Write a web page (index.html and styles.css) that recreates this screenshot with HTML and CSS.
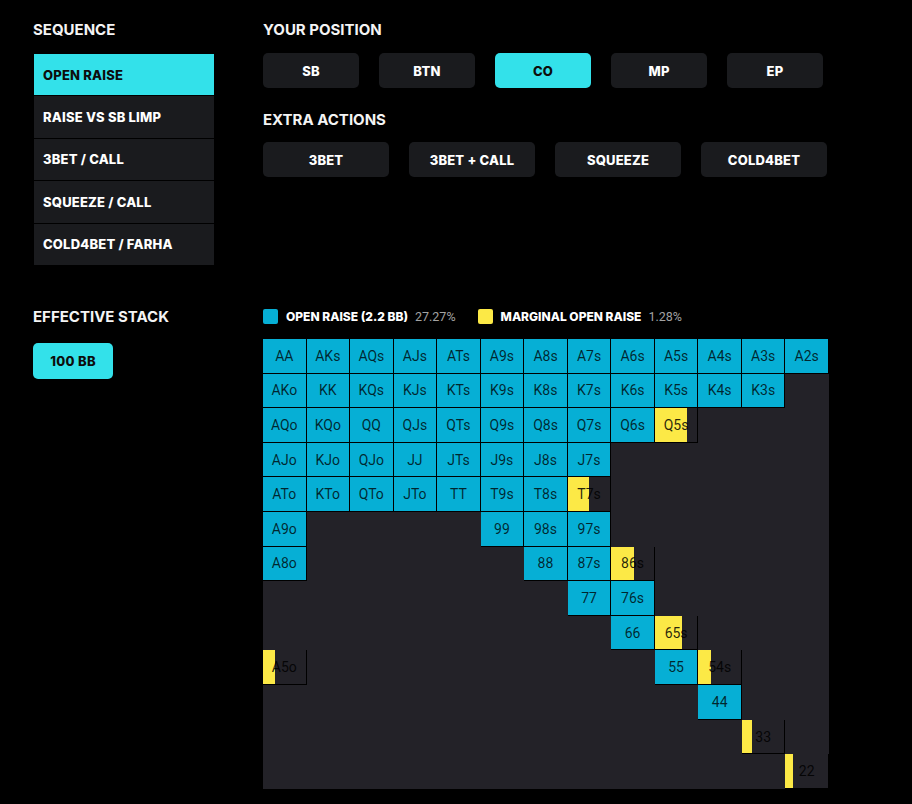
FILE: index.html
```html
<!DOCTYPE html>
<html lang="en">
<head>
<meta charset="utf-8">
<title>Preflop Ranges</title>
<link rel="stylesheet" href="styles.css">
</head>
<body>
<div class="page">
  <section class="top">
    <div class="col-left">
      <h2 class="title">SEQUENCE</h2>
      <div class="seq">
        <div class="seq-item active">OPEN RAISE</div>
        <div class="seq-item">RAISE VS SB LIMP</div>
        <div class="seq-item">3BET / CALL</div>
        <div class="seq-item">SQUEEZE / CALL</div>
        <div class="seq-item">COLD4BET / FARHA</div>
      </div>
    </div>
    <div class="col-right">
      <h2 class="title">YOUR POSITION</h2>
      <div class="btn-row">
        <div class="btn pos">SB</div>
        <div class="btn pos">BTN</div>
        <div class="btn pos active">CO</div>
        <div class="btn pos">MP</div>
        <div class="btn pos">EP</div>
      </div>
      <h2 class="title title-extra">EXTRA ACTIONS</h2>
      <div class="btn-row btn-row-extra">
        <div class="btn act">3BET</div>
        <div class="btn act">3BET + CALL</div>
        <div class="btn act">SQUEEZE</div>
        <div class="btn act">COLD4BET</div>
      </div>
    </div>
  </section>

  <section class="bottom">
    <div class="col-left">
      <h2 class="title">EFFECTIVE STACK</h2>
      <div class="stack-btn">100 BB</div>
    </div>
    <div class="col-right">
      <div class="legend">
        <div class="legend-item">
          <span class="sw sw-blue"></span>
          <span class="lg-label">OPEN RAISE (2.2 BB)</span>
          <span class="lg-pct">27.27%</span>
        </div>
        <div class="legend-item">
          <span class="sw sw-yellow"></span>
          <span class="lg-label">MARGINAL OPEN RAISE</span>
          <span class="lg-pct">1.28%</span>
        </div>
      </div>
      <div class="grid">
        <!-- row A -->
        <div class="c r">AA</div><div class="c r">AKs</div><div class="c r">AQs</div><div class="c r">AJs</div><div class="c r">ATs</div><div class="c r">A9s</div><div class="c r">A8s</div><div class="c r">A7s</div><div class="c r">A6s</div><div class="c r">A5s</div><div class="c r">A4s</div><div class="c r">A3s</div><div class="c r">A2s</div>
        <!-- row K -->
        <div class="c r">AKo</div><div class="c r">KK</div><div class="c r">KQs</div><div class="c r">KJs</div><div class="c r">KTs</div><div class="c r">K9s</div><div class="c r">K8s</div><div class="c r">K7s</div><div class="c r">K6s</div><div class="c r">K5s</div><div class="c r">K4s</div><div class="c r">K3s</div><div class="c"></div>
        <!-- row Q -->
        <div class="c r">AQo</div><div class="c r">KQo</div><div class="c r">QQ</div><div class="c r">QJs</div><div class="c r">QTs</div><div class="c r">Q9s</div><div class="c r">Q8s</div><div class="c r">Q7s</div><div class="c r">Q6s</div><div class="c m" style="--y:77%">Q5s</div><div class="c"></div><div class="c"></div><div class="c"></div>
        <!-- row J -->
        <div class="c r">AJo</div><div class="c r">KJo</div><div class="c r">QJo</div><div class="c r">JJ</div><div class="c r">JTs</div><div class="c r">J9s</div><div class="c r">J8s</div><div class="c r">J7s</div><div class="c"></div><div class="c"></div><div class="c"></div><div class="c"></div><div class="c"></div>
        <!-- row T -->
        <div class="c r">ATo</div><div class="c r">KTo</div><div class="c r">QTo</div><div class="c r">JTo</div><div class="c r">TT</div><div class="c r">T9s</div><div class="c r">T8s</div><div class="c m" style="--y:50%">T7s</div><div class="c"></div><div class="c"></div><div class="c"></div><div class="c"></div><div class="c"></div>
        <!-- row 9 -->
        <div class="c r">A9o</div><div class="c"></div><div class="c"></div><div class="c"></div><div class="c"></div><div class="c r">99</div><div class="c r">98s</div><div class="c r">97s</div><div class="c"></div><div class="c"></div><div class="c"></div><div class="c"></div><div class="c"></div>
        <!-- row 8 -->
        <div class="c r">A8o</div><div class="c"></div><div class="c"></div><div class="c"></div><div class="c"></div><div class="c"></div><div class="c r">88</div><div class="c r">87s</div><div class="c m" style="--y:53%">86s</div><div class="c"></div><div class="c"></div><div class="c"></div><div class="c"></div>
        <!-- row 7 -->
        <div class="c"></div><div class="c"></div><div class="c"></div><div class="c"></div><div class="c"></div><div class="c"></div><div class="c"></div><div class="c r">77</div><div class="c r">76s</div><div class="c"></div><div class="c"></div><div class="c"></div><div class="c"></div>
        <!-- row 6 -->
        <div class="c"></div><div class="c"></div><div class="c"></div><div class="c"></div><div class="c"></div><div class="c"></div><div class="c"></div><div class="c"></div><div class="c r">66</div><div class="c m" style="--y:65%">65s</div><div class="c"></div><div class="c"></div><div class="c"></div>
        <!-- row 5 -->
        <div class="c m" style="--y:28%">A5o</div><div class="c"></div><div class="c"></div><div class="c"></div><div class="c"></div><div class="c"></div><div class="c"></div><div class="c"></div><div class="c"></div><div class="c r">55</div><div class="c m" style="--y:30%">54s</div><div class="c"></div><div class="c"></div>
        <!-- row 4 -->
        <div class="c"></div><div class="c"></div><div class="c"></div><div class="c"></div><div class="c"></div><div class="c"></div><div class="c"></div><div class="c"></div><div class="c"></div><div class="c"></div><div class="c r">44</div><div class="c"></div><div class="c"></div>
        <!-- row 3 -->
        <div class="c"></div><div class="c"></div><div class="c"></div><div class="c"></div><div class="c"></div><div class="c"></div><div class="c"></div><div class="c"></div><div class="c"></div><div class="c"></div><div class="c"></div><div class="c m" style="--y:23%">33</div><div class="c"></div>
        <!-- row 2 -->
        <div class="c"></div><div class="c"></div><div class="c"></div><div class="c"></div><div class="c"></div><div class="c"></div><div class="c"></div><div class="c"></div><div class="c"></div><div class="c"></div><div class="c"></div><div class="c"></div><div class="c m" style="--y:18%">22</div>
      </div>
    </div>
  </section>
</div>
</body>
</html>
```

FILE: styles.css
```css
* { box-sizing: border-box; }

body {
  margin: 0;
  background: #000;
  color: #f2f2f2;
  font-family: Inter, "Noto Sans", sans-serif;
}

.page {
  padding: 21px 33px 0;
}

.top,
.bottom {
  display: grid;
  grid-template-columns: 181px 566px;
  column-gap: 49px;
}

.bottom {
  margin-top: 43px;
}

.title {
  margin: 0;
  font-size: 15px;
  line-height: 18px;
  font-weight: 700;
  color: #f4f4f4;
}

.title-extra {
  margin-top: 23px;
}

/* Sequence list */
.seq {
  margin-top: 15px;
  margin-left: 1px;
  width: 180px;
  display: flex;
  flex-direction: column;
  gap: 1px;
}

.seq-item {
  height: 41.4px;
  display: flex;
  align-items: center;
  padding-left: 9px;
  background: #1a1b1e;
  font-size: 13px;
  font-weight: 800;
  letter-spacing: 0.2px;
  color: #fff;
}

.seq-item.active {
  background: #33e1ea;
  color: #0d0d0d;
}

/* Buttons */
.btn-row {
  display: flex;
  gap: 20px;
  margin-top: 14px;
}

.btn-row-extra {
  margin-top: 13px;
}

.btn {
  height: 35px;
  display: flex;
  align-items: center;
  justify-content: center;
  border-radius: 5px;
  background: #1a1b1e;
  font-size: 13px;
  font-weight: 800;
  letter-spacing: 0.2px;
  color: #fff;
}

.pos { width: 96px; }
.act { width: 126px; }

.btn.active {
  background: #33e1ea;
  color: #0d0d0d;
}

.stack-btn {
  margin-top: 17px;
  width: 80px;
  height: 36px;
  border-radius: 5px;
  background: #33e1ea;
  color: #0d0d0d;
  display: flex;
  align-items: center;
  justify-content: center;
  font-size: 13px;
  font-weight: 800;
  letter-spacing: 0.3px;
}

/* Legend */
.legend {
  display: flex;
  align-items: center;
  height: 18px;
  gap: 22px;
}

.legend-item {
  display: flex;
  align-items: center;
}

.sw {
  width: 15px;
  height: 15px;
  border-radius: 2px;
  margin-right: 8px;
}

.sw-blue { background: #06afd5; }
.sw-yellow { background: #fce946; }

.lg-label {
  font-size: 12px;
  font-weight: 800;
  color: #fff;
}

.lg-pct {
  margin-left: 7px;
  font-family: Roboto, "Liberation Sans", sans-serif;
  font-size: 12.5px;
  color: #a3a3a3;
}

/* Range grid */
.grid {
  margin-top: 13px;
  width: 566px;
  height: 450px;
  background: #232228;
  display: grid;
  grid-template-columns: repeat(13, 1fr);
  grid-template-rows: repeat(13, 1fr);
}

.c {
  display: flex;
  align-items: center;
  justify-content: center;
  font-family: Roboto, "Liberation Sans", sans-serif;
  font-size: 14px;
  color: rgba(0, 0, 0, 0.78);
}

.c.r {
  background: #06afd5;
  border-right: 1px solid #000;
  border-bottom: 1px solid #000;
}

.c.m {
  background: linear-gradient(90deg, #fce946 var(--y), transparent var(--y));
  border-right: 1px solid #000;
  border-bottom: 1px solid #000;
  color: rgba(0, 0, 0, 0.85);
}
```
